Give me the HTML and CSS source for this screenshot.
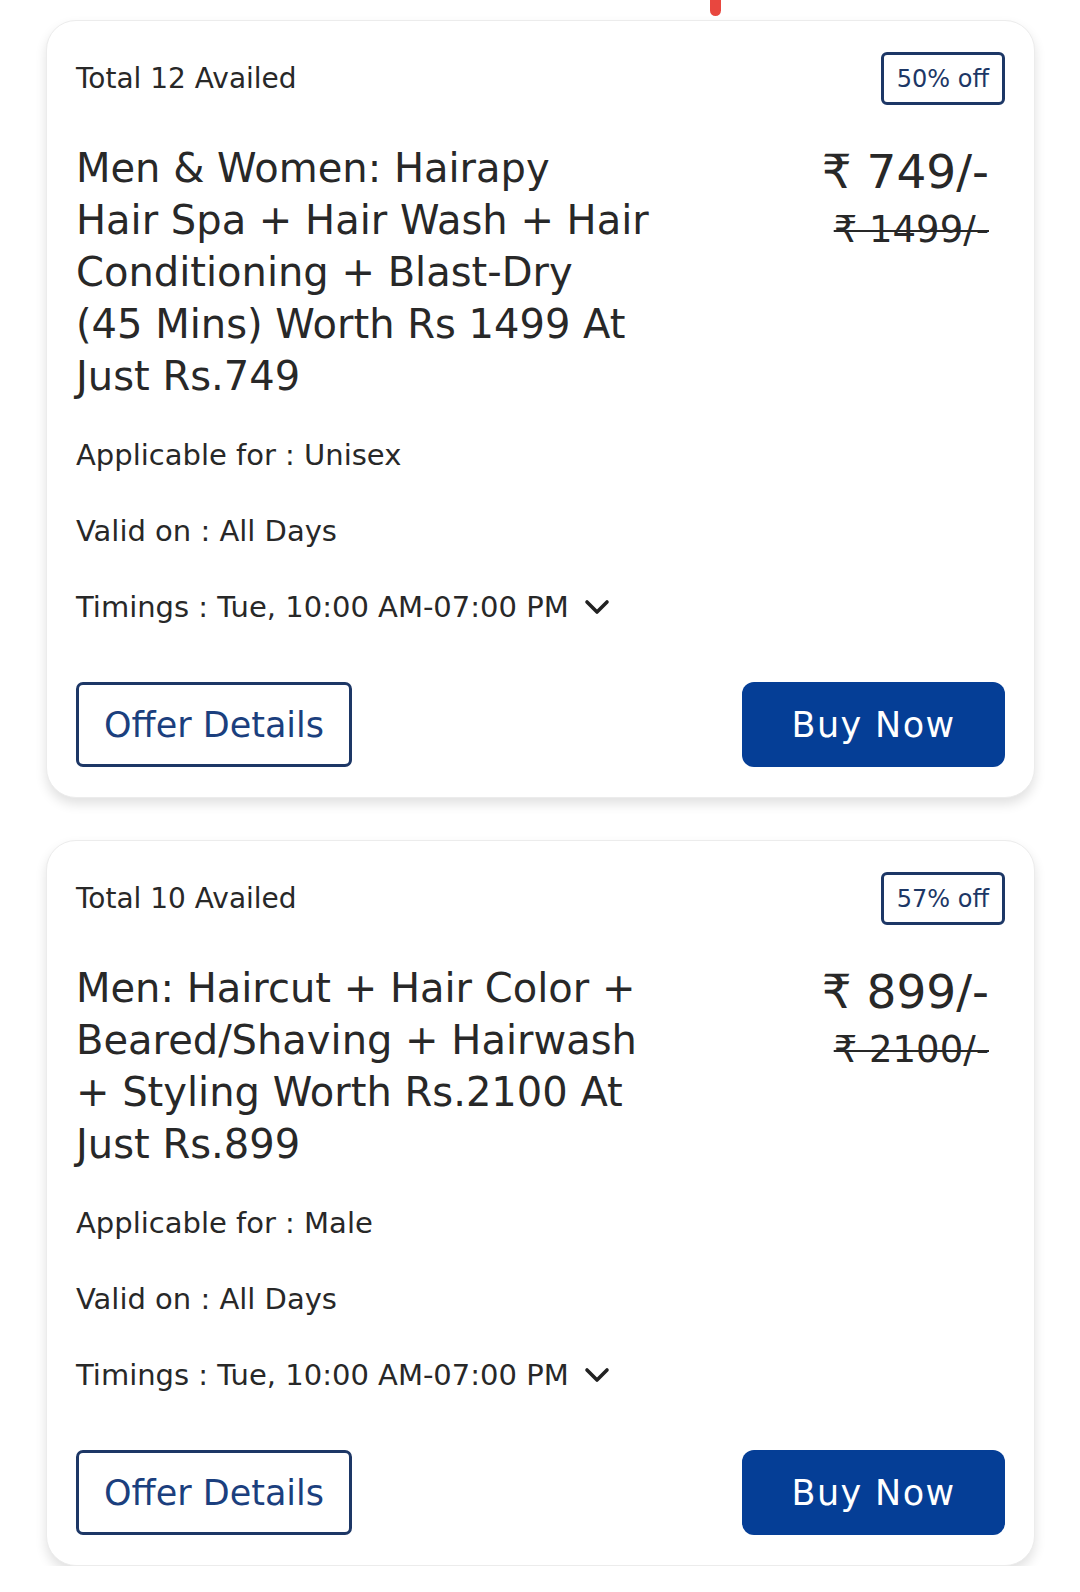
FILE: index.html
```html
<!DOCTYPE html>
<html lang="en">
<head>
    <meta charset="UTF-8">
    <meta name="viewport" content="width=device-width, initial-scale=1">
    <title>Offers</title>
    <link rel="stylesheet" href="styles.css">
</head>
<body>

<div class="scroll-mark"></div>

<div class="offers">

    <div class="offer-card">
        <div class="top-row">
            <span class="availed">Total 12 Availed</span>
            <span class="badge">50% off</span>
        </div>
        <div class="main-row">
            <h2 class="title">Men &amp; Women: Hairapy<br>Hair Spa + Hair Wash + Hair<br>Conditioning + Blast-Dry<br>(45 Mins) Worth Rs 1499 At<br>Just Rs.749</h2>
            <div class="price">
                <div class="price-now">₹ 749/-</div>
                <div class="price-old">₹ 1499/-</div>
            </div>
        </div>
        <p class="info">Applicable for : Unisex</p>
        <p class="info">Valid on : All Days</p>
        <p class="info timings">Timings : Tue, 10:00 AM-07:00 PM
            <svg class="chevron" width="26" height="16" viewBox="0 0 26 16"><polyline points="3,3 13,13 23,3" fill="none" stroke="#222" stroke-width="3.6" stroke-linecap="round" stroke-linejoin="round"/></svg>
        </p>
        <div class="actions">
            <button class="btn-outline">Offer Details</button>
            <button class="btn-buy">Buy Now</button>
        </div>
    </div>

    <div class="offer-card">
        <div class="top-row">
            <span class="availed">Total 10 Availed</span>
            <span class="badge">57% off</span>
        </div>
        <div class="main-row">
            <h2 class="title">Men: Haircut + Hair Color +<br>Beared/Shaving + Hairwash<br>+ Styling Worth Rs.2100 At<br>Just Rs.899</h2>
            <div class="price">
                <div class="price-now">₹ 899/-</div>
                <div class="price-old">₹ 2100/-</div>
            </div>
        </div>
        <p class="info">Applicable for : Male</p>
        <p class="info">Valid on : All Days</p>
        <p class="info timings">Timings : Tue, 10:00 AM-07:00 PM
            <svg class="chevron" width="26" height="16" viewBox="0 0 26 16"><polyline points="3,3 13,13 23,3" fill="none" stroke="#222" stroke-width="3.6" stroke-linecap="round" stroke-linejoin="round"/></svg>
        </p>
        <div class="actions">
            <button class="btn-outline">Offer Details</button>
            <button class="btn-buy">Buy Now</button>
        </div>
    </div>

</div>

</body>
</html>
```

FILE: styles.css
```css
body {
    margin: 0;
    background-color: #fff;
    font-family: "DejaVu Sans", "Open Sans", sans-serif;
    color: #282828;
}

.scroll-mark {
    position: absolute;
    top: -6px;
    left: 710px;
    width: 11px;
    height: 22px;
    border-radius: 6px;
    background-color: #e8473f;
}

.offers {
    display: flex;
    flex-direction: column;
    gap: 42px;
    padding: 20px 45px 0 46px;
}

.offer-card {
    background-color: #fff;
    border: 1px solid #ececec;
    border-radius: 30px;
    box-shadow: 0 6px 12px rgba(0, 0, 0, 0.12);
    padding: 31px 29px 30px 29px;
}

.top-row {
    display: flex;
    justify-content: space-between;
    align-items: center;
    height: 53px;
}

.availed {
    font-size: 28px;
}

.badge {
    box-sizing: border-box;
    height: 53px;
    padding: 0 13px;
    display: flex;
    align-items: center;
    border: 3px solid #1d3766;
    border-radius: 6px;
    color: #1d3766;
    font-size: 24px;
}

.main-row {
    display: flex;
    justify-content: space-between;
    margin-top: 37px;
}

.title {
    margin: 0;
    font-size: 40px;
    font-weight: 400;
    line-height: 52px;
    white-space: nowrap;
}

.price {
    text-align: right;
    margin-right: 16px;
}

.price-now {
    font-size: 47px;
    line-height: 60px;
}

.price-old {
    margin-top: 4px;
    font-size: 37px;
    line-height: 48px;
    text-decoration: line-through;
    text-decoration-thickness: 2px;
}

.info {
    margin: 36px 0 0 0;
    font-size: 29px;
    line-height: 40px;
}

.main-row + .info {
    margin-top: 33px;
}

.timings {
    display: flex;
    align-items: center;
    gap: 15px;
}

.actions {
    display: flex;
    justify-content: space-between;
    margin-top: 55px;
}

.actions button {
    box-sizing: border-box;
    height: 85px;
    font-family: "DejaVu Sans", "Open Sans", sans-serif;
    font-size: 35px;
    cursor: pointer;
}

.btn-outline {
    width: 276px;
    background-color: #fff;
    border: 3px solid #1d3766;
    border-radius: 7px;
    color: #1b3f7e;
}

.btn-buy {
    width: 263px;
    background-color: #053e96;
    border: none;
    border-radius: 12px;
    color: #fff;
    letter-spacing: 1.4px;
}
```
